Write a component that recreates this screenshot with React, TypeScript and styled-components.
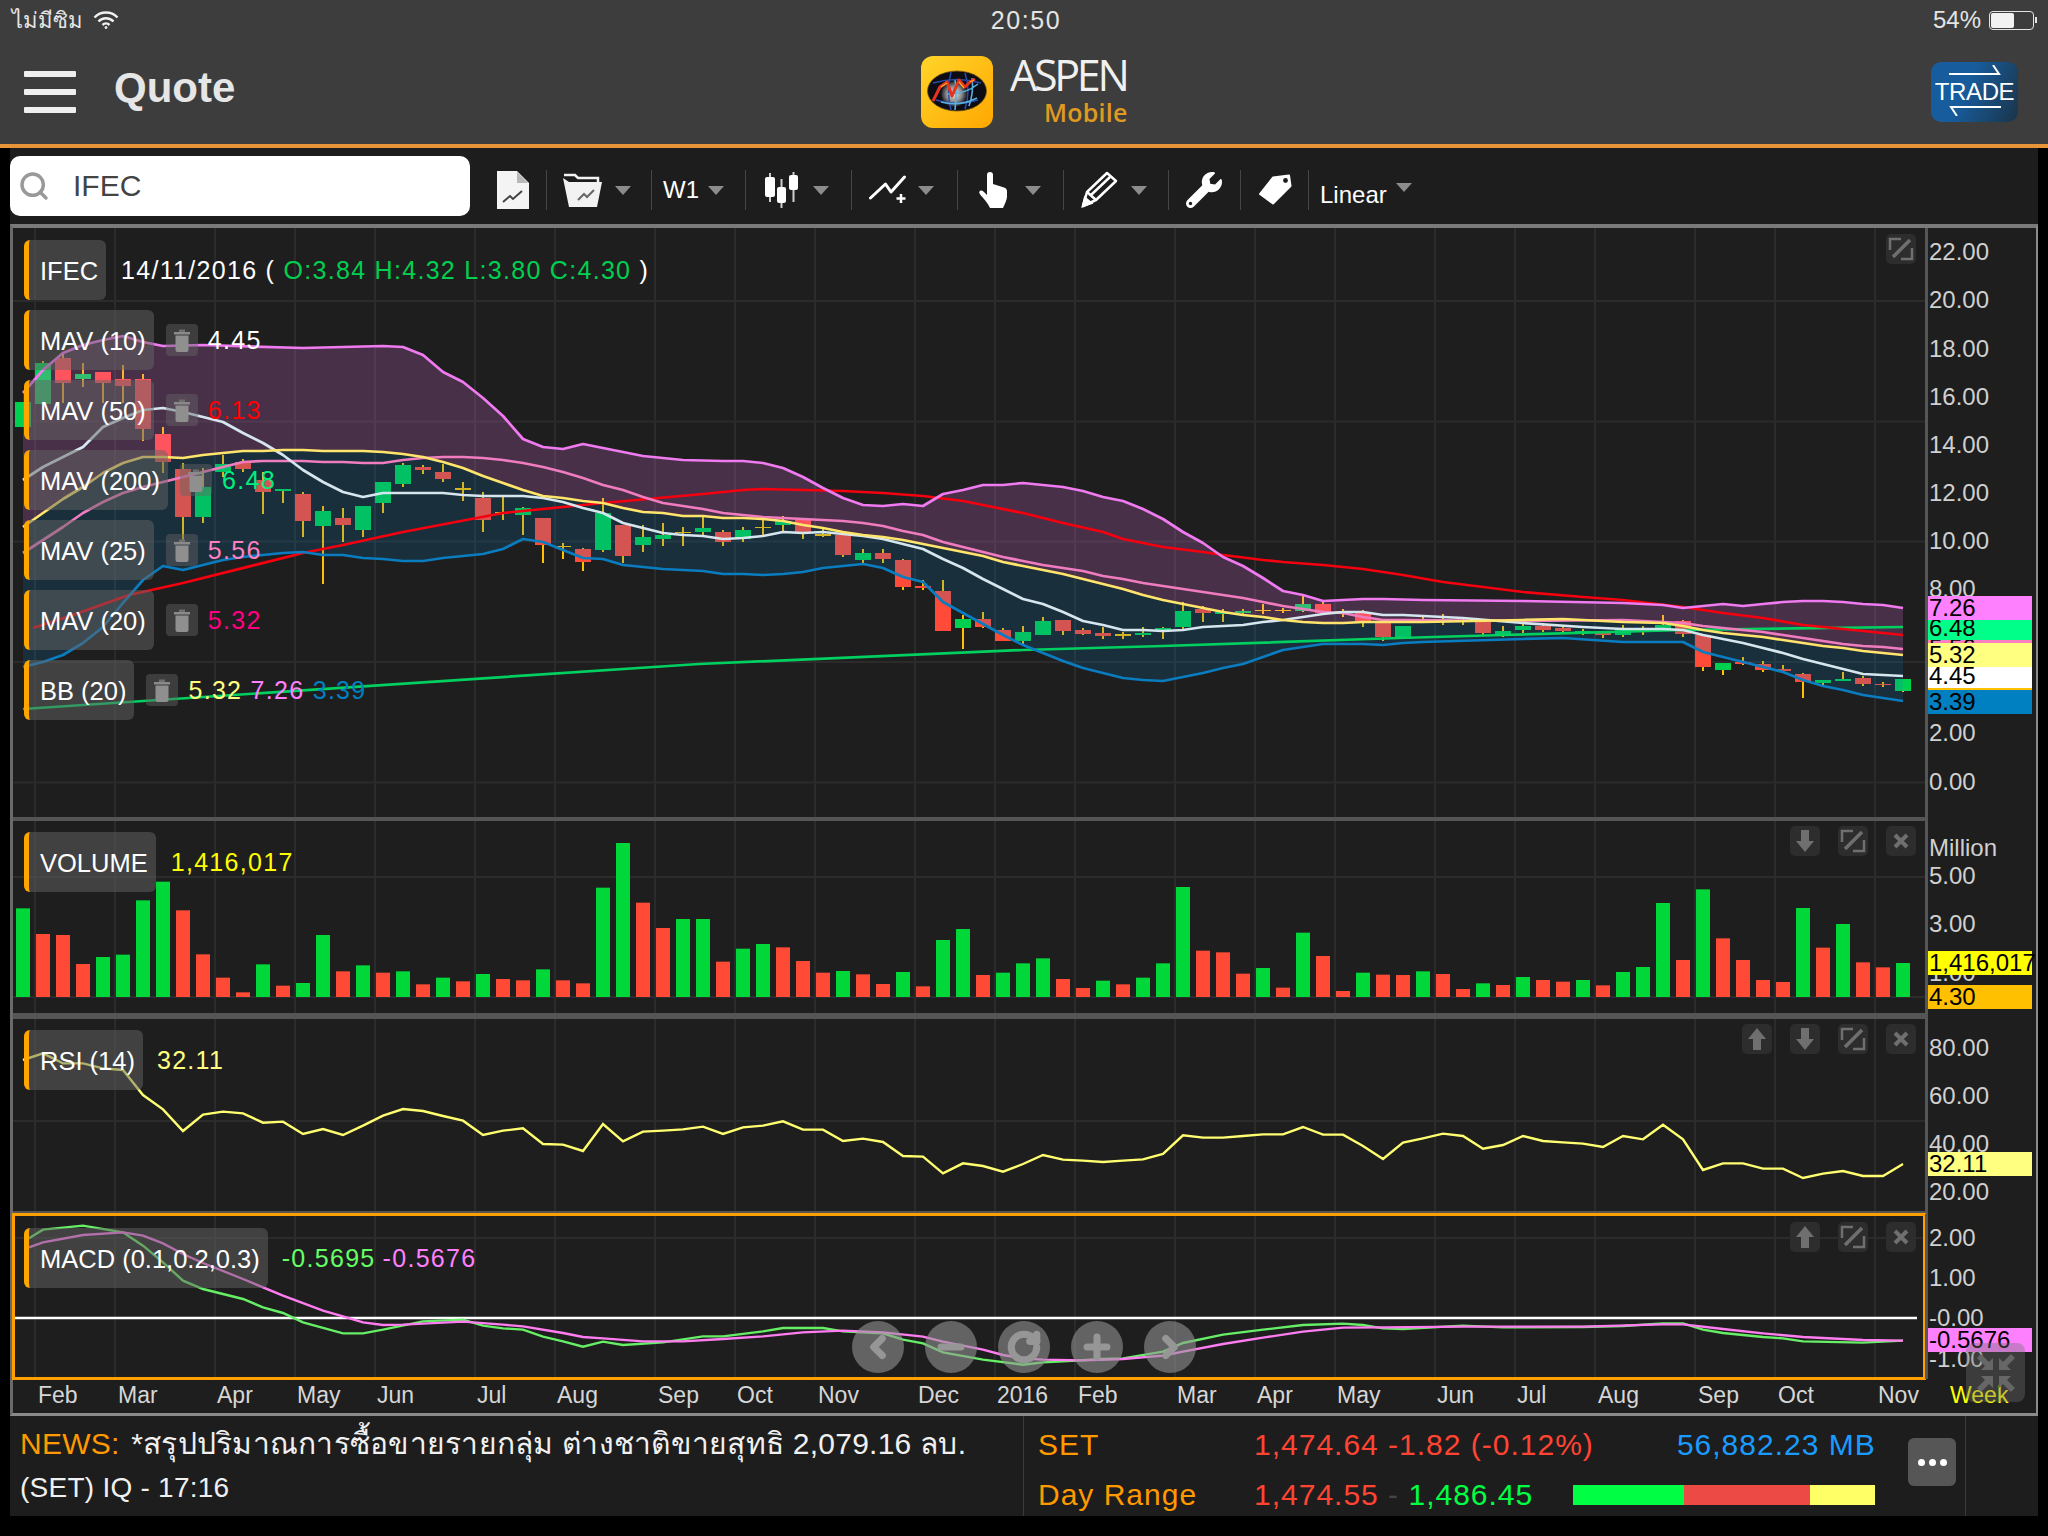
import React from "react";
import styled, { createGlobalStyle } from "styled-components";
import { ChevronLeft, ChevronRight, Minus, Plus, RotateCw, Search } from "lucide-react";
import { FaWrench } from "react-icons/fa";

type Pt = [number, number];
type Candle = ["g" | "r" | "d", number, number, number, number];

const GlobalStyle = createGlobalStyle`
  html, body { margin: 0; padding: 0; background: #000; }
  body { font-family: "Liberation Sans", "Noto Sans", "DejaVu Sans", sans-serif; }
  * { box-sizing: border-box; }
`;

// bars sit 20px apart, first one centred on x=23
const X = (i: number) => 23 + 20 * i;
const line = (a: Pt[]) => a.map(([i, y]) => `${X(i)},${y}`).join(" ");
const GRID_X = [35, 115, 215, 295, 375, 475, 555, 655, 735, 815, 915, 995, 1075, 1175, 1255, 1335, 1435, 1515, 1595, 1695, 1775, 1875];

const upperBand: Pt[] = [[0,393],[1,370],[2,353],[3,345],[4,340],[5,336],[6,342],[7,346],[9,345],[14,348],[18,346],[19,347],[20,355],[21,372],[22,382],[23,398],[24,416],[25,439],[26,447],[27,449],[28,444],[30,452],[31,456],[33,460],[35,461],[36,461],[37,463],[38,468],[39,477],[40,488],[41,498],[42,505],[43,506],[44,504],[45,506],[46,494],[47,490],[48,485],[49,485],[50,483],[51,485],[52,487],[53,491],[54,497],[55,501],[56,509],[57,519],[58,532],[59,543],[60,557],[61,566],[62,578],[63,591],[64,595],[65,601],[66,600],[67,599],[68,599],[70,600],[75,601],[80,603],[82,605],[83,608],[84,606],[85,604],[86,606],[87,604],[88,602],[89,601],[90,601],[91,602],[92,604],[93,605],[94,608]];
const lowerBand: Pt[] = [[0,667],[1,662],[2,655],[3,643],[4,627],[5,603],[6,580],[7,566],[8,570],[9,565],[10,560],[11,557],[12,555],[13,553],[14,552],[15,555],[16,555],[17,558],[18,559],[19,561],[20,561],[21,558],[22,556],[23,554],[24,549],[25,539],[26,542],[27,550],[28,558],[29,559],[30,565],[31,567],[32,569],[33,570],[34,571],[35,574],[36,574],[37,575],[38,574],[39,572],[40,568],[41,566],[42,564],[43,568],[44,577],[45,582],[46,602],[47,613],[48,624],[49,635],[50,645],[51,653],[52,661],[53,668],[54,673],[55,678],[56,680],[57,681],[58,677],[59,673],[60,668],[61,664],[62,657],[63,650],[64,647],[65,644],[66,644],[67,644],[68,645],[69,643],[70,642],[75,639],[77,638],[80,642],[83,642],[84,652],[85,657],[86,662],[87,667],[88,672],[89,680],[90,686],[91,690],[92,695],[93,698],[94,701]];
const midBand: Pt[] = [[0,527],[1,513],[2,499],[3,487],[4,473],[5,463],[6,457],[7,457],[8,458],[9,455],[10,453],[11,451],[12,451],[13,450],[14,450],[15,451],[17,451],[18,452],[19,454],[20,457],[21,462],[22,468],[23,476],[24,483],[25,490],[26,496],[27,498],[28,501],[29,503],[30,508],[31,512],[32,513],[33,516],[34,516],[35,518],[36,518],[37,519],[38,521],[39,525],[40,528],[41,532],[42,535],[43,537],[44,540],[45,544],[46,548],[47,552],[48,556],[49,562],[50,566],[51,570],[52,574],[53,579],[54,584],[55,589],[56,595],[57,600],[58,604],[59,608],[60,612],[61,615],[62,617],[63,620],[64,622],[65,623],[66,623],[67,622],[68,622],[70,622],[75,620],[77,619],[80,622],[82,623],[83,626],[84,630],[85,633],[86,635],[87,637],[88,640],[89,643],[90,646],[91,648],[92,651],[93,653],[94,655]];
const mav25: Pt[] = [[0,553],[1,540],[2,527],[3,513],[4,502],[5,493],[6,487],[7,482],[8,477],[9,472],[10,467],[11,462],[12,461],[14,461],[15,462],[16,462],[17,463],[18,463],[19,460],[20,458],[21,457],[22,457],[23,458],[24,460],[25,463],[26,467],[27,472],[28,478],[29,485],[30,490],[31,497],[32,503],[33,506],[34,509],[35,513],[36,515],[37,517],[38,518],[39,519],[40,520],[41,521],[42,523],[43,526],[44,531],[45,535],[46,542],[47,547],[48,552],[49,557],[50,561],[51,565],[52,568],[53,571],[54,576],[55,579],[56,583],[57,586],[58,589],[59,592],[60,595],[61,598],[62,602],[63,606],[64,609],[65,612],[66,613],[67,617],[68,620],[69,620],[75,621],[80,620],[82,622],[83,623],[84,626],[85,628],[86,630],[87,632],[88,635],[89,638],[90,641],[91,644],[92,646],[93,647],[94,649]];
const mav10: Pt[] = [[0,480],[1,467],[2,457],[3,447],[4,427],[5,418],[6,410],[7,408],[8,412],[9,417],[10,422],[11,433],[12,443],[13,455],[14,470],[15,482],[16,492],[17,497],[18,493],[20,493],[21,493],[22,495],[23,496],[25,496],[26,498],[27,502],[28,508],[29,513],[30,523],[31,528],[32,533],[33,535],[34,536],[35,539],[36,538],[37,536],[38,532],[39,533],[40,532],[41,534],[42,536],[43,539],[44,544],[45,549],[46,559],[47,568],[48,579],[49,589],[50,599],[51,604],[52,612],[53,621],[54,625],[55,630],[56,630],[57,631],[58,630],[59,627],[60,626],[61,625],[62,622],[63,620],[64,617],[65,614],[66,612],[67,612],[68,615],[69,615],[70,616],[72,618],[75,623],[78,627],[80,629],[82,629],[83,630],[84,635],[85,639],[86,643],[87,648],[88,653],[89,659],[90,664],[91,669],[92,674],[93,675],[94,676]];
const mav50: Pt[] = [[0.5,628],[2.5,615],[5.3,595],[8,583],[14,553],[16,545],[19,532],[24,513],[29,503],[34,494],[36,490],[37,489],[39,490],[41,491],[43,493],[45,496],[47,501],[48,505],[50,513],[52,523],[54,532],[55,539],[57,547],[59,552],[60,555],[62,560],[63,562],[65,565],[67,569],[68,572],[69,575],[71,582],[73,587],[75,592],[78,597],[80,600],[83,607],[85,613],[87,618],[89,625],[91,629],[94,635]];
const mav200: Pt[] = [[0,709],[33.8,664],[50,650],[57,646],[68.8,638],[74,635],[83,630],[94,627]];

const candles: Candle[] = [
  ["g",402,427,402,427],["g",363,404,361,404],["r",358,383,352,403],["g",374,379,363,387],["r",372,383,372,403],["r",379,386,365,403],["r",379,429,374,441],["r",434,462,427,473],["r",469,517,463,542],["g",487,517,468,523],
  ["g",464,472,455,477],["r",462,469,459,472],["r",480,492,472,514],["g",489,491,489,503],["r",494,521,492,537],["g",511,526,506,584],["r",518,525,508,542],["g",506,530,506,537],["g",482,503,482,513],["g",465,484,463,487],
  ["r",467,470,465,474],["r",472,479,464,482],["d",488,490,482,501],["r",498,520,492,532],["d",512,513,497,520],["g",508,515,507,535],["r",518,545,518,563],["d",546,547,543,559],["r",549,562,548,571],["g",513,550,498,552],
  ["r",525,556,525,563],["g",537,545,525,552],["g",535,539,523,546],["d",532,533,527,546],["g",528,532,517,535],["r",532,542,530,546],["g",530,539,527,542],["d",527,528,520,535],["g",521,525,516,532],["r",520,533,518,539],
  ["d",534,536,528,537],["r",535,555,535,557],["g",553,560,549,564],["r",553,559,549,563],["r",560,587,559,590],["r",586,588,580,590],["r",591,631,580,631],["g",619,628,615,649],["r",619,627,612,628],["r",630,641,628,641],
  ["g",632,641,626,644],["g",621,635,617,635],["r",620,631,620,635],["r",630,634,628,635],["r",633,636,627,639],["d",634,636,632,639],["g",633,635,627,637],["g",628,631,627,639],["g",611,627,602,630],["r",609,613,606,622],
  ["g",612,614,609,622],["g",611,613,609,615],["d",610,611,604,614],["d",610,611,608,613],["g",604,611,596,612],["r",604,613,602,615],["d",611,612,609,617],["r",613,621,610,627],["r",622,637,622,641],["g",626,639,626,639],
  ["d",621,622,616,622],["g",619,622,614,625],["d",620,621,618,625],["r",622,633,619,635],["g",631,635,626,637],["g",626,630,623,633],["r",626,630,623,632],["r",628,631,625,633],["g",631,632,629,635],["r",633,635,632,638],
  ["g",629,635,625,637],["g",628,630,626,635],["g",625,629,615,630],["r",621,634,620,637],["r",635,667,635,671],["g",663,670,663,675],["r",662,664,657,665],["r",664,670,661,672],["r",669,671,665,672],["r",674,682,673,698],
  ["g",680,683,680,687],["g",679,681,672,681],["r",678,684,676,686],["r",684,685,682,687],["g",679,691,679,692],
];

// top edge of each volume bar, in the thirds of a pixel the bars were measured in
const volumeTops: [string, number][] = [
  ["g",295],["r",372],["r",375],["r",462],["g",441],["g",434],["g",271],["g",215],["r",301],["r",433],["r",503],["r",547],["g",463],["r",527],["g",519],["g",375],["r",484],["g",466],["r",488],["g",484],
  ["r",523],["g",503],["r",514],["g",492],["r",507],["r",511],["g",478],["r",511],["r",520],["g",233],["g",99],["r",278],["r",354],["g",327],["g",327],["r",455],["g",416],["g",402],["r",412],["r",453],
  ["r",488],["g",483],["r",493],["r",522],["g",486],["r",529],["g",390],["g",357],["r",495],["g",488],["g",460],["g",445],["r",507],["r",534],["g",512],["r",523],["g",503],["g",460],["g",231],["r",422],
  ["r",427],["r",491],["g",474],["r",533],["g",368],["r",438],["r",543],["g",488],["r",494],["r",495],["g",484],["r",492],["r",537],["g",520],["r",525],["g",501],["r",510],["r",515],["g",510],["r",526],
  ["g",486],["g",471],["g",279],["r",450],["g",238],["r",385],["r",450],["r",510],["r",516],["g",294],["r",413],["g",342],["r",457],["r",472],["g",459],
];

const rsi = [750,730,760,760,775,780,855,898,963,914,905,910,938,935,972,957,975,947,917,897,903,918,932,975,962,955,1002,1004,1023,942,994,965,962,958,950,972,952,947,934,959,959,993,986,996,1038,1040,1090,1060,1068,1085,1062,1035,1049,1052,1056,1052,1048,1032,976,983,983,978,973,973,951,974,974,1008,1047,998,985,971,978,1016,1005,978,993,997,1001,1011,978,988,944,988,1080,1060,1060,1076,1076,1104,1091,1083,1098,1098,1062];

const macdLine: Pt[] = [[0.3,118],[1,92],[3,80],[5,100],[6,140],[7,190],[8,245],[9,270],[11,300],[12,325],[13,342],[14,370],[16,403],[17,403],[18,392],[20,367],[22,362],[23,380],[24,388],[25,392],[26,413],[27,427],[28,443],[29,428],[30,438],[32,430],[34,412],[35,412],[37,397],[38,387],[40,387],[41,397],[43,403],[44,422],[45,433],[46,460],[48,482],[50,497],[51,490],[52,487],[54,480],[55,478],[57,458],[58,432],[60,407],[62,392],[64,378],[66,374],[67,378],[68,388],[69,390],[72,380],[74,385],[78,384],[80,381],[82,373],[83,373],[84,392],[85,402],[87,414],[88,418],[89,427],[92,431],[94,425]];
const macdSignal: Pt[] = [[0.3,145],[1,130],[3,108],[5,100],[6,110],[7,133],[8,165],[9,192],[11,240],[13,290],[15,335],[16,352],[17,370],[18,378],[19,377],[22,368],[24,377],[25,382],[27,402],[28,414],[29,418],[31,427],[33,427],[35,420],[37,412],[39,400],[41,395],[43,400],[45,413],[46,428],[48,452],[49,468],[50,478],[51,482],[53,484],[55,480],[57,470],[58,458],[60,435],[62,416],[64,398],[66,386],[68,385],[72,383],[78,383],[82,376],[83,376],[85,390],[87,403],[89,414],[92,423],[94,425]];
const toMacd = (a: Pt[]): Pt[] => a.map(([i, z]) => [i, 1200 + z / 3]);

const MONTHS: [string, number][] = [["Feb",38],["Mar",118],["Apr",217],["May",297],["Jun",377],["Jul",477],["Aug",557],["Sep",658],["Oct",737],["Nov",818],["Dec",918],["2016",997],["Feb",1078],["Mar",1177],["Apr",1257],["May",1337],["Jun",1437],["Jul",1517],["Aug",1598],["Sep",1698],["Oct",1778],["Nov",1878]];

const Page = styled.div`
  width: 2048px;
  height: 1536px;
  background: #000;
  overflow: hidden;
  display: flex;
  flex-direction: column;
  color: #fff;
`;

const TopArea = styled.header`
  height: 148px;
  background: #3d3d3d;
  border-bottom: 4px solid #e8943a;
  display: flex;
  flex-direction: column;
`;

const StatusBar = styled.div`
  height: 40px;
  padding: 0 14px 0 12px;
  display: grid;
  grid-template-columns: 1fr auto 1fr;
  align-items: center;
  font-size: 24px;
  color: #e4e4e4;
`;

const StatusLeft = styled.div`
  display: flex;
  align-items: center;
  gap: 10px;
`;

const Carrier = styled.span`
  font-size: 22px;
`;

const Clock = styled.span`
  font-size: 25px;
  letter-spacing: 1.6px;
  margin-left: 6px;
`;

const StatusRight = styled.div`
  display: flex;
  justify-content: flex-end;
  align-items: center;
  gap: 8px;
`;

const Battery = styled.div`
  width: 45px;
  height: 19px;
  border: 1.5px solid #e4e4e4;
  border-radius: 4px;
  padding: 1px;
  position: relative;
  &::after {
    content: "";
    position: absolute;
    right: -4px;
    top: 5px;
    width: 2px;
    height: 6px;
    background: #e4e4e4;
  }
`;

const BatteryFill = styled.div`
  width: 23px;
  height: 100%;
  background: #f2f2f2;
  border-radius: 2px;
`;

const NavBar = styled.div`
  flex: 1;
  display: grid;
  grid-template-columns: 1fr auto 1fr;
  align-items: center;
`;

const NavLeft = styled.div`
  display: flex;
  align-items: center;
  padding-left: 24px;
  gap: 38px;
`;

const Burger = styled.div`
  display: flex;
  flex-direction: column;
  gap: 12px;
  width: 52px;
`;

const BurgerBar = styled.div`
  height: 6px;
  background: #efefef;
  border-radius: 1px;
`;

const PageTitle = styled.div`
  font-size: 42px;
  font-weight: 700;
  color: #e6e6e6;
  margin-top: -8px;
`;

const Brand = styled.div`
  display: flex;
  align-items: center;
  gap: 16px;
`;

const BrandIcon = styled.div`
  width: 72px;
  height: 72px;
  border-radius: 12px;
  background: linear-gradient(135deg, #ffd52a, #ffa700);
  display: flex;
  align-items: center;
  justify-content: center;
`;

const BrandText = styled.div`
  display: flex;
  flex-direction: column;
  align-items: flex-end;
  width: 119px;
`;

const BrandName = styled.div`
  font-family: "Open Sans", sans-serif;
  font-weight: 400;
  font-size: 43px;
  line-height: 44px;
  letter-spacing: -3.3px;
  color: #f0f0f0;
  margin: -4px 1px 0 0;
`;

const BrandSub = styled.div`
  font-family: "Open Sans", sans-serif;
  font-weight: 600;
  font-size: 25px;
  line-height: 30px;
  letter-spacing: 0.2px;
  color: #e09a20;
`;

const NavRight = styled.div`
  display: flex;
  justify-content: flex-end;
  padding-right: 30px;
`;

const TradeButton = styled.div`
  width: 87px;
  height: 60px;
  padding-bottom: 4px;
  border-radius: 10px;
  background: linear-gradient(115deg, #175c9c 40%, #1b3448);
  display: flex;
  flex-direction: column;
  align-items: center;
  justify-content: center;
  font-size: 24px;
  line-height: 24px;
  letter-spacing: -0.4px;
  color: #fff;
`;

const TradeLabel = styled.span`
  margin: 5px 0 2px;
`;

const Toolbar = styled.div`
  height: 76px;
  margin: 0 10px;
  background: #1d1d1d;
  display: flex;
  align-items: center;
`;

const SearchBox = styled.div`
  width: 460px;
  height: 60px;
  background: #fff;
  border-radius: 10px;
  display: flex;
  align-items: center;
  padding-left: 8px;
  gap: 23px;
  margin-right: 7px;
  color: #999;
`;

const SearchText = styled.span`
  font-size: 30px;
  color: #444;
`;

const ToolGroup = styled.div<{ $w: number; $pad: number; $gap?: number; $last?: boolean }>`
  width: ${(p) => p.$w}px;
  height: 40px;
  margin-top: 8px;
  padding-left: ${(p) => p.$pad}px;
  display: flex;
  align-items: center;
  gap: ${(p) => p.$gap ?? 0}px;
  border-right: ${(p) => (p.$last ? "none" : "1px solid #454545")};
  color: #fff;
  font-size: 24px;
`;

const Caret = styled.span`
  width: 0;
  height: 0;
  border-left: 8px solid transparent;
  border-right: 8px solid transparent;
  border-top: 9px solid #8c8c8c;
`;

const LinearLabel = styled.span`
  margin-top: 10px;
`;

const LinearCaret = styled(Caret)`
  margin-top: -6px;
`;

const ChartFrame = styled.div`
  height: 1192px;
  margin: 0 10px;
  background: #1e1e1e;
  border-top: 4px solid #7a7a7a;
  border-left: 3px solid #6a6a6a;
  border-right: 2px solid #8a8a8a;
  border-bottom: 3px solid #8a8a8a;
  display: flex;
  flex-direction: column;
`;

const PanelRow = styled.div<{ $h: number }>`
  height: ${(p) => p.$h}px;
  display: flex;
`;

const Plot = styled.div<{ $sep?: number; $active?: boolean }>`
  width: 1912px;
  height: 100%;
  position: relative;
  border-bottom: ${(p) => (p.$sep ? `${p.$sep}px solid #555` : "none")};
  outline: ${(p) => (p.$active ? "3px solid #ffa000" : "none")};
  outline-offset: -2px;
`;

const PlotSvg = styled.svg`
  display: block;
  width: 1912px;
`;

const AxisColumn = styled.div`
  flex: 1;
  position: relative;
  border-left: 3px solid #555;
`;

const AxisLabel = styled.div<{ $y: number }>`
  position: absolute;
  left: 1px;
  top: ${(p) => p.$y}px;
  transform: translateY(-50%);
  font-size: 24px;
  line-height: 28px;
  color: #d0d0d0;
`;

const PriceTag = styled.div<{ $y: number; $bg: string }>`
  position: absolute;
  left: 0;
  top: ${(p) => p.$y}px;
  width: 104px;
  height: 24px;
  line-height: 24px;
  padding-left: 1px;
  font-size: 24px;
  color: #000;
  white-space: nowrap;
  background: ${(p) => p.$bg};
`;

const Legend = styled.div<{ $top: number }>`
  position: absolute;
  left: 11px;
  top: ${(p) => p.$top}px;
  display: flex;
  flex-direction: column;
  gap: 10px;
`;

const LegendRow = styled.div`
  display: flex;
  align-items: center;
  height: 60px;
  font-size: 25px;
  letter-spacing: 1.3px;
`;

const Chip = styled.div`
  height: 60px;
  padding: 2px 8px 0 11px;
  display: flex;
  align-items: center;
  border-left: 5px solid #ffa500;
  border-radius: 6px;
  background: rgba(100, 100, 100, 0.5);
  color: #fff;
  font-size: 25.5px;
  letter-spacing: 0;
  white-space: nowrap;
`;

const TrashButton = styled.div`
  width: 32px;
  height: 32px;
  margin: 0 10px 0 12px;
  border-radius: 4px;
  background: rgba(100, 100, 100, 0.45);
  display: flex;
  align-items: center;
  justify-content: center;
`;

const Value = styled.span<{ $c: string; $ml?: number }>`
  color: ${(p) => p.$c};
  margin-left: ${(p) => p.$ml ?? 0}px;
  white-space: pre;
`;

const PanelTools = styled.div<{ $top: number }>`
  position: absolute;
  right: 9px;
  top: ${(p) => p.$top}px;
  display: flex;
  gap: 18px;
`;

const ToolIcon = styled.div`
  width: 30px;
  height: 30px;
  border-radius: 5px;
  background: #2d2d2d;
  display: flex;
  align-items: center;
  justify-content: center;
  color: #6f6f6f;
`;

const NavStrip = styled.div`
  position: absolute;
  left: 839px;
  top: 107px;
  display: flex;
  gap: 21px;
`;

const NavCircle = styled.div`
  width: 52px;
  height: 52px;
  border-radius: 50%;
  background: rgba(150, 150, 150, 0.58);
  color: #969696;
  display: flex;
  align-items: center;
  justify-content: center;
`;

const TimeAxis = styled.div`
  flex: 1;
  position: relative;
  font-size: 23px;
  color: #d6d6d6;
`;

const MonthLabel = styled.span<{ $x: number; $c?: string }>`
  position: absolute;
  left: ${(p) => p.$x}px;
  top: 2px;
  line-height: 28px;
  color: ${(p) => p.$c ?? "inherit"};
`;

const CollapseButton = styled.div`
  position: absolute;
  left: 1953px;
  top: -36px;
  width: 59px;
  height: 59px;
  border-radius: 8px;
  background: rgba(110, 110, 110, 0.38);
  display: flex;
  align-items: center;
  justify-content: center;
`;

const Footer = styled.footer`
  height: 100px;
  margin: 0 10px;
  background: #1d1d1d;
  display: grid;
  grid-template-columns: 1014px 942px 1fr;
`;

const NewsCell = styled.div`
  padding: 10px 0 0 10px;
  border-right: 1px solid #3a3a3a;
`;

const NewsLine = styled.div<{ $size: number; $mt?: number }>`
  font-size: ${(p) => p.$size}px;
  line-height: 36px;
  margin-top: ${(p) => p.$mt ?? 0}px;
  letter-spacing: 0.25px;
  white-space: nowrap;
  color: #f0f0f0;
`;

const NewsTag = styled.span`
  color: #ff9900;
  margin-right: 3px;
`;

const MarketCell = styled.div`
  display: grid;
  grid-template-columns: 216px 1fr;
  grid-template-rows: 52px 48px;
  padding-left: 14px;
  align-items: center;
  font-size: 30px;
  letter-spacing: 1px;
  position: relative;
  border-right: 1px solid #3a3a3a;
`;

const MarketName = styled.div`
  color: #ff9900;
  padding-top: 5px;
`;

const MarketValues = styled.div`
  display: flex;
  align-items: center;
  padding-top: 5px;
  white-space: pre;
`;

const Turnover = styled.span`
  color: #1a9cff;
  margin-left: 83px;
`;

const RangeBar = styled.div`
  display: flex;
  width: 302px;
  height: 20px;
  margin-left: 40px;
`;

const RangePart = styled.div<{ $w: number; $c: string }>`
  width: ${(p) => p.$w}px;
  background: ${(p) => p.$c};
`;

const MoreButton = styled.div`
  position: absolute;
  right: 9px;
  top: 22px;
  width: 48px;
  height: 48px;
  border-radius: 6px;
  background: #565656;
  display: flex;
  align-items: center;
  justify-content: center;
  gap: 4px;
`;

const MoreDot = styled.span`
  width: 7px;
  height: 7px;
  border-radius: 50%;
  background: #fff;
`;

function Grid({ y0, y1, rows }: { y0: number; y1: number; rows: number[] }) {
  return (
    <g stroke="#2b2b2b" strokeWidth="2">
      {GRID_X.map((x) => (
        <line key={x} x1={x} x2={x} y1={y0} y2={y1} />
      ))}
      {rows.map((y) => (
        <line key={y} x1={13} x2={1925} y1={y} y2={y} />
      ))}
    </g>
  );
}

function Trash() {
  return (
    <svg width="18" height="25" viewBox="0 0 18 25">
      <path d="M1 4h16v2.500H1z" fill="#8a8a8a" />
      <path d="M6 1.500h6V4H6z" fill="#6f6f6f" />
      <path d="M2.500 7.500h13V22a2 2 0 0 1-2 2h-9a2 2 0 0 1-2-2z" fill="#8f8f8f" />
    </svg>
  );
}

function ArrowIcon({ up }: { up?: boolean }) {
  return (
    <svg width="20" height="24" viewBox="0 0 20 24" style={up ? undefined : { transform: "rotate(180deg)" }}>
      <path d="M10 1l9 11h-5v11H6V12H1z" fill="currentColor" />
    </svg>
  );
}

function CloseIcon() {
  return (
    <svg width="16" height="16" viewBox="0 0 16 16" stroke="currentColor" strokeWidth="4">
      <path d="M2 2l12 12M14 2L2 14" />
    </svg>
  );
}

function ExpandIcon() {
  return (
    <svg width="26" height="24" viewBox="0 0 26 24" fill="none" stroke="currentColor" strokeWidth="2.500">
      <path d="M13 2H2v11M13 22h11V11" />
      <path d="M5 20L22 3" strokeWidth="3.500" />
    </svg>
  );
}

function DocIcon() {
  return (
    <svg width="34" height="40" viewBox="0 0 34 40">
      <path d="M1 1h20l12 12v26H1z" fill="#f4f4f4" />
      <path d="M21 2l11 11H21z" fill="#b8b8b8" />
      <path d="M7 32l7-6 3 3 9-8" fill="none" stroke="#444" strokeWidth="2" />
    </svg>
  );
}

function FolderIcon() {
  return (
    <svg width="41" height="36" viewBox="0 0 41 36" fill="none">
      <path d="M2 3h11l3 3h20v4" stroke="#f2f2f2" strokeWidth="2.500" />
      <path d="M1 6l6 29h28l5-25H7z" fill="#f2f2f2" />
      <path d="M16 28l6-6 3 3 7-7" stroke="#666" strokeWidth="2" />
    </svg>
  );
}

function CandlesIcon() {
  return (
    <svg width="36" height="38" viewBox="0 0 36 38" fill="#fff">
      <path d="M7 2v29M18.500 8v29M30.500 1v30" stroke="#cfcfcf" strokeWidth="2" fill="none" />
      <rect x="2" y="6" width="10" height="20" rx="2" />
      <rect x="14" y="16" width="9" height="16" rx="2" />
      <rect x="26" y="4" width="9" height="15" rx="2" />
    </svg>
  );
}

function DrawLineIcon() {
  return (
    <svg width="38" height="30" viewBox="0 0 38 30" fill="none" stroke="#fff">
      <path d="M1.500 23L16.500 9 22 17 35.500 2" strokeWidth="3" strokeLinecap="round" strokeLinejoin="round" />
      <path d="M32 19v9M27.500 23.500h9" strokeWidth="2.500" />
    </svg>
  );
}

function HandIcon() {
  return (
    <svg width="28" height="36" viewBox="0 0 28 36">
      <path d="M8 3a3 3 0 0 1 6 0v9l11 3.500c2 .6 3 2 3 4v5c0 3-2 7-4 11.500H11C9 31 5 27 1.500 23c-1-1.500-2-3-.5-4s3 0 4.500 1.500L8 23z" fill="#fff" />
    </svg>
  );
}

function PencilIcon() {
  return (
    <svg width="38" height="38" viewBox="0 0 38 38" fill="none" stroke="#fff" strokeWidth="2.500">
      <path d="M3 35l4-14L27 2l9 8-20 19z" strokeLinejoin="round" />
      <path d="M11 24L30 6M7 21l9 8" />
      <path d="M3 35l2-8 6 5z" fill="#fff" />
    </svg>
  );
}

function TagIcon() {
  return (
    <svg width="34" height="32" viewBox="0 0 34 32">
      <path d="M15 3.500L31 1.500l1.500 10.500L15 29.500 2 20z" fill="#fff" stroke="#fff" strokeWidth="2" strokeLinejoin="round" />
      <circle cx="27.500" cy="6.500" r="2.400" fill="#1d1d1d" />
    </svg>
  );
}

function WifiIcon() {
  return (
    <svg width="26" height="18" viewBox="0 0 26 18" fill="none" stroke="#f0f0f0" strokeWidth="2.500">
      <path d="M1.500 6.500a16 16 0 0 1 23 0M5.500 10.500a10.500 10.500 0 0 1 15 0M9.500 14a5 5 0 0 1 7 0" />
      <circle cx="13" cy="16.500" r="1" fill="#f0f0f0" strokeWidth="1" />
    </svg>
  );
}

function GlobeLogo() {
  return (
    <svg width="60" height="42" viewBox="0 0 60 42" style={{ marginTop: -2 }}>
      <defs>
        <radialGradient id="gl" cx="0.5" cy="0.5" r="0.5">
          <stop offset="0" stopColor="#e6e6e6" />
          <stop offset="0.6" stopColor="#8a8a8a" />
          <stop offset="1" stopColor="#1a1a22" />
        </radialGradient>
      </defs>
      <ellipse cx="30" cy="21" rx="29.500" ry="20" fill="#0b0c14" stroke="#7a5a10" strokeWidth="0.800" />
      <circle cx="27" cy="24" r="13" fill="url(#gl)" />
      <path d="M6 13q24 -7 48 0M9 30q21 7 42 0M24 2q-5 19 0 38M38 3q6 18 0 36" stroke="#2a4db0" strokeWidth="1.500" fill="none" />
      <path d="M14 32q18 5 36-4M28 40q2-18 0-30M42 36q5-14 3-28M51 14q-12 10-30 10" stroke="#58b0e0" strokeWidth="1.600" fill="none" />
      <path d="M6 31l7-14 7-5 5 14 7-16 6 7 5-5 5-3" stroke="#e8321c" strokeWidth="3" fill="none" strokeLinejoin="round" />
      <path d="M14 17l6-4M32 12l5 6M43 12l4-2" stroke="#ffb020" strokeWidth="1.200" fill="none" />
    </svg>
  );
}

function TradeArrow({ left }: { left?: boolean }) {
  return (
    <svg width="56" height="10" viewBox="0 0 56 10" fill="none" stroke="#fff" strokeWidth="2" style={left ? { transform: "rotate(180deg)" } : undefined}>
      <path d="M2 9h50L46 0" />
    </svg>
  );
}

function CollapseIcon() {
  return (
    <svg width="46" height="46" viewBox="0 0 46 46" fill="#666">
      <path d="M20 20H8l4-4-8-8 4-4 8 8 4-4zM26 20h12l-4-4 8-8-4-4-8 8-4-4zM20 26H8l4 4-8 8 4 4 8-8 4 4zM26 26h12l-4 4 8 8-4 4-8-8-4 4z" />
    </svg>
  );
}

const AXIS_PRICE: [string, number][] = [["22.00",252],["20.00",300],["18.00",349],["16.00",397],["14.00",445],["12.00",493],["10.00",541],["8.00",589],["2.00",733],["0.00",782]];
const PRICE_TAGS: [string, number, string][] = [
  ["4.30", 667, "#ffc000"],
  ["4.45", 664, "#ffffff"],
  ["5.56", 636, "#ff80c0"],
  ["6.48", 616, "#00ff88"],
  ["7.26", 596, "#ff80ff"],
  ["5.32", 643, "#ffff80"],
  ["3.39", 690, "#0080c0"],
];

const INDICATORS: [string, string, string][] = [
  ["MAV (10)", "4.45", "#ffffff"],
  ["MAV (50)", "6.13", "#ff0000"],
  ["MAV (200)", "6.48", "#00f080"],
  ["MAV (25)", "5.56", "#ff80c0"],
  ["MAV (20)", "5.32", "#ff0080"],
];

export default function App() {
  const fillTop = [...upperBand.map(([i, y]) => `${X(i)},${y}`), ...[...midBand].reverse().map(([i, y]) => `${X(i)},${y}`)].join(" ");
  const fillBottom = [...midBand.map(([i, y]) => `${X(i)},${y}`), ...[...lowerBand].reverse().map(([i, y]) => `${X(i)},${y}`)].join(" ");

  return (
    <Page>
      <GlobalStyle />
      <TopArea>
        <StatusBar>
          <StatusLeft>
            <Carrier>ไม่มีซิม</Carrier>
            <WifiIcon />
          </StatusLeft>
          <Clock>20:50</Clock>
          <StatusRight>
            <span>54%</span>
            <Battery>
              <BatteryFill />
            </Battery>
          </StatusRight>
        </StatusBar>
        <NavBar>
          <NavLeft>
            <Burger>
              <BurgerBar />
              <BurgerBar />
              <BurgerBar />
            </Burger>
            <PageTitle>Quote</PageTitle>
          </NavLeft>
          <Brand>
            <BrandIcon>
              <GlobeLogo />
            </BrandIcon>
            <BrandText>
              <BrandName>ASPEN</BrandName>
              <BrandSub>Mobile</BrandSub>
            </BrandText>
          </Brand>
          <NavRight>
            <TradeButton>
              <TradeArrow />
              <TradeLabel>TRADE</TradeLabel>
              <TradeArrow left />
            </TradeButton>
          </NavRight>
        </NavBar>
      </TopArea>

      <Toolbar>
        <SearchBox>
          <Search size={32} strokeWidth={2.6} />
          <SearchText>IFEC</SearchText>
        </SearchBox>
        <ToolGroup $w={70} $pad={19}>
          <DocIcon />
        </ToolGroup>
        <ToolGroup $w={105} $pad={15} $gap={12}>
          <FolderIcon />
          <Caret />
        </ToolGroup>
        <ToolGroup $w={94} $pad={11} $gap={9}>
          W1
          <Caret />
        </ToolGroup>
        <ToolGroup $w={106} $pad={17} $gap={14}>
          <CandlesIcon />
          <Caret />
        </ToolGroup>
        <ToolGroup $w={106} $pad={17} $gap={11}>
          <DrawLineIcon />
          <Caret />
        </ToolGroup>
        <ToolGroup $w={106} $pad={21} $gap={18}>
          <HandIcon />
          <Caret />
        </ToolGroup>
        <ToolGroup $w={105} $pad={16} $gap={13}>
          <PencilIcon />
          <Caret />
        </ToolGroup>
        <ToolGroup $w={72} $pad={17}>
          <FaWrench size={36} />
        </ToolGroup>
        <ToolGroup $w={68} $pad={17}>
          <TagIcon />
        </ToolGroup>
        <ToolGroup $w={120} $pad={11} $gap={9} $last>
          <LinearLabel>Linear</LinearLabel>
          <LinearCaret />
        </ToolGroup>
      </Toolbar>

      <ChartFrame>
        <PanelRow $h={593}>
          <Plot $sep={4}>
            <PlotSvg viewBox="13 228 1912 589" height={589}>
              <Grid y0={228} y1={817} rows={[301, 421.5, 541.5, 662, 782.5]} />
              {candles.map(([kind, top, bottom, hi, lo], i) => {
                const body = kind === "g" ? "#00d050" : kind === "r" ? "#ff4b37" : "#ffc000";
                return (
                  <g key={i}>
                    <line x1={X(i)} x2={X(i)} y1={hi} y2={lo} stroke="#ffc000" strokeWidth="2" />
                    <rect x={X(i) - 8} y={top} width="16" height={bottom - top} fill={body} />
                  </g>
                );
              })}
              <polygon points={fillTop} fill="rgba(245,120,245,0.2)" />
              <polygon points={fillBottom} fill="rgba(10,130,200,0.18)" />
              <g fill="none" strokeWidth="2.7" strokeLinejoin="round">
                <polyline points={line(mav200)} stroke="#00d060" />
                <polyline points={line(mav50)} stroke="#f4000f" />
                <polyline points={line(mav25)} stroke="#f07cc0" />
                <polyline points={line(upperBand)} stroke="#f07af0" />
                <polyline points={line(lowerBand)} stroke="#0a7cc0" />
                <polyline points={line(mav10)} stroke="#d6e6ee" />
                <polyline points={line(midBand)} stroke="#ffe56b" />
              </g>
            </PlotSvg>
            <Legend $top={12}>
              <LegendRow>
                <Chip>IFEC</Chip>
                <Value $c="#fff" $ml={15}>
                  14/11/2016 ( <Value $c="#00d050">O:3.84 H:4.32 L:3.80 C:4.30</Value> )
                </Value>
              </LegendRow>
              {INDICATORS.map(([name, val, color]) => (
                <LegendRow key={name}>
                  <Chip>{name}</Chip>
                  <TrashButton>
                    <Trash />
                  </TrashButton>
                  <Value $c={color}>{val}</Value>
                </LegendRow>
              ))}
              <LegendRow>
                <Chip>BB (20)</Chip>
                <TrashButton>
                  <Trash />
                </TrashButton>
                <Value $c="#ffff80">5.32 </Value>
                <Value $c="#ff80ff">7.26 </Value>
                <Value $c="#0080c0">3.39</Value>
              </LegendRow>
            </Legend>
            <PanelTools $top={6}>
              <ToolIcon>
                <ExpandIcon />
              </ToolIcon>
            </PanelTools>
          </Plot>
          <AxisColumn>
            {AXIS_PRICE.map(([t, y]) => (
              <AxisLabel key={t} $y={y - 228}>
                {t}
              </AxisLabel>
            ))}
            {PRICE_TAGS.map(([t, y, bg]) => (
              <PriceTag key={t} $y={y - 228} $bg={bg}>
                {t}
              </PriceTag>
            ))}
          </AxisColumn>
        </PanelRow>

        <PanelRow $h={198}>
          <Plot $sep={6}>
            <PlotSvg viewBox="13 821 1912 192" height={192}>
              <Grid y0={821} y1={1013} rows={[877, 997]} />
              {volumeTops.map(([kind, top], i) => (
                <rect key={i} x={X(i) - 7} y={810 + top / 3} width="14" height={(561 - top) / 3} fill={kind === "g" ? "#00d83a" : "#ff4a35"} />
              ))}
            </PlotSvg>
            <Legend $top={11}>
              <LegendRow>
                <Chip>VOLUME</Chip>
                <Value $c="#ffff00" $ml={15}>
                  1,416,017
                </Value>
              </LegendRow>
            </Legend>
            <PanelTools $top={5}>
              <ToolIcon>
                <ArrowIcon />
              </ToolIcon>
              <ToolIcon>
                <ExpandIcon />
              </ToolIcon>
              <ToolIcon>
                <CloseIcon />
              </ToolIcon>
            </PanelTools>
          </Plot>
          <AxisColumn>
            <AxisLabel $y={27}>Million</AxisLabel>
            <AxisLabel $y={55}>5.00</AxisLabel>
            <AxisLabel $y={103}>3.00</AxisLabel>
            <AxisLabel $y={152}>1.00</AxisLabel>
            <PriceTag $y={130} $bg="#ffff00">
              1,416,017
            </PriceTag>
            <PriceTag $y={164} $bg="#ffc000">
              4.30
            </PriceTag>
          </AxisColumn>
        </PanelRow>

        <PanelRow $h={195}>
          <Plot $sep={3}>
            <PlotSvg viewBox="13 1019 1912 192" height={192}>
              <Grid y0={1019} y1={1211} rows={[1121]} />
              <polyline points={line(rsi.map((v, i) => [i, 810 + v / 3] as Pt))} fill="none" stroke="#ffff70" strokeWidth="2.4" />
            </PlotSvg>
            <Legend $top={11}>
              <LegendRow>
                <Chip>RSI (14)</Chip>
                <Value $c="#ffff80" $ml={14}>
                  32.11
                </Value>
              </LegendRow>
            </Legend>
            <PanelTools $top={5}>
              <ToolIcon>
                <ArrowIcon up />
              </ToolIcon>
              <ToolIcon>
                <ArrowIcon />
              </ToolIcon>
              <ToolIcon>
                <ExpandIcon />
              </ToolIcon>
              <ToolIcon>
                <CloseIcon />
              </ToolIcon>
            </PanelTools>
          </Plot>
          <AxisColumn>
            <AxisLabel $y={29}>80.00</AxisLabel>
            <AxisLabel $y={77}>60.00</AxisLabel>
            <AxisLabel $y={125}>40.00</AxisLabel>
            <AxisLabel $y={173}>20.00</AxisLabel>
            <PriceTag $y={133} $bg="#ffff80">
              32.11
            </PriceTag>
          </AxisColumn>
        </PanelRow>

        <PanelRow $h={165}>
          <Plot $active>
            <PlotSvg viewBox="13 1215 1912 165" height={165}>
              <Grid y0={1215} y1={1380} rows={[1239]} />
              <line x1="15" x2="1917" y1="1319" y2="1319" stroke="#fff" strokeWidth="2.4" />
              <polyline points={line(toMacd(macdLine))} fill="none" stroke="#66ee66" strokeWidth="2.4" />
              <polyline points={line(toMacd(macdSignal))} fill="none" stroke="#ff7df0" strokeWidth="2.4" />
            </PlotSvg>
            <Legend $top={14}>
              <LegendRow>
                <Chip>MACD (0.1,0.2,0.3)</Chip>
                <Value $c="#66ff66" $ml={14}>
                  -0.5695
                </Value>
                <Value $c="#ff80ff" $ml={7}>
                  -0.5676
                </Value>
              </LegendRow>
            </Legend>
            <PanelTools $top={8}>
              <ToolIcon>
                <ArrowIcon up />
              </ToolIcon>
              <ToolIcon>
                <ExpandIcon />
              </ToolIcon>
              <ToolIcon>
                <CloseIcon />
              </ToolIcon>
            </PanelTools>
            <NavStrip>
              <NavCircle>
                <ChevronLeft size={34} strokeWidth={5} />
              </NavCircle>
              <NavCircle>
                <Minus size={34} strokeWidth={5} />
              </NavCircle>
              <NavCircle>
                <RotateCw size={34} strokeWidth={5} />
              </NavCircle>
              <NavCircle>
                <Plus size={34} strokeWidth={5} />
              </NavCircle>
              <NavCircle>
                <ChevronRight size={34} strokeWidth={5} />
              </NavCircle>
            </NavStrip>
          </Plot>
          <AxisColumn>
            <AxisLabel $y={24}>2.00</AxisLabel>
            <AxisLabel $y={64}>1.00</AxisLabel>
            <AxisLabel $y={104}>-0.00</AxisLabel>
            <AxisLabel $y={145}>-1.00</AxisLabel>
            <PriceTag $y={114} $bg="#ff80ff">
              -0.5676
            </PriceTag>
          </AxisColumn>
        </PanelRow>

        <TimeAxis>
          {MONTHS.map(([m, x], i) => (
            <MonthLabel key={i} $x={x - 13}>
              {m}
            </MonthLabel>
          ))}
          <MonthLabel $x={1937} $c="#ffff00">
            Week
          </MonthLabel>
          <CollapseButton>
            <CollapseIcon />
          </CollapseButton>
        </TimeAxis>
      </ChartFrame>

      <Footer>
        <NewsCell>
          <NewsLine $size={30}>
            <NewsTag>NEWS:</NewsTag> *สรุปปริมาณการซื้อขายรายกลุ่ม ต่างชาติขายสุทธิ 2,079.16 ลบ.
          </NewsLine>
          <NewsLine $size={28} $mt={8}>
            (SET) IQ - 17:16
          </NewsLine>
        </NewsCell>
        <MarketCell>
          <MarketName>SET</MarketName>
          <MarketValues>
            <Value $c="#ff4433">1,474.64 -1.82 (-0.12%)</Value>
            <Turnover>56,882.23 MB</Turnover>
          </MarketValues>
          <MarketName>Day Range</MarketName>
          <MarketValues>
            <Value $c="#ff4433">1,474.55</Value>
            <Value $c="#444"> - </Value>
            <Value $c="#00ff44">1,486.45</Value>
            <RangeBar>
              <RangePart $w={111} $c="#00ff44" />
              <RangePart $w={126} $c="#ec4a45" />
              <RangePart $w={65} $c="#ffff66" />
            </RangeBar>
          </MarketValues>
          <MoreButton>
            <MoreDot />
            <MoreDot />
            <MoreDot />
          </MoreButton>
        </MarketCell>
        <div />
      </Footer>
    </Page>
  );
}
